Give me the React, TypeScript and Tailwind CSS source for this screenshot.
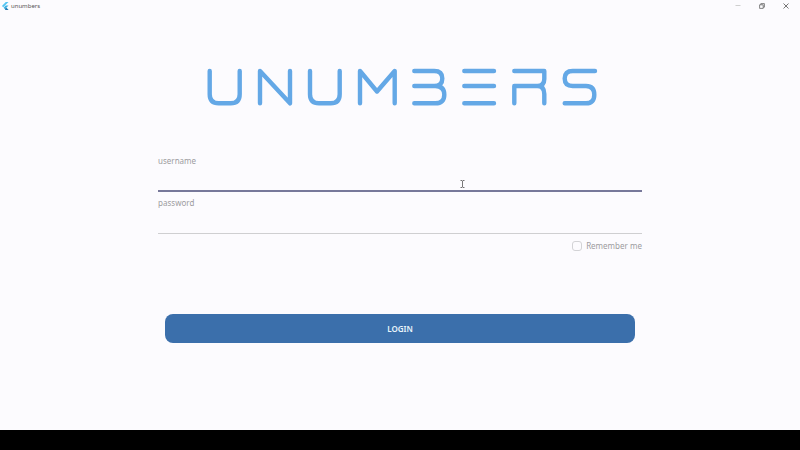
import { useId, type InputHTMLAttributes } from "react";

function AppIcon() {
  return (
    <svg viewBox="0 0 16 16" className="h-2.5 w-2" aria-hidden="true">
      <path d="M9.5 0H15L4.5 10.5 1.8 7.8z" fill="#55c5f3" />
      <path d="M9.5 7.2H15L10.7 11.5 15 16H9.5L5.2 11.5z" fill="#3fb2e3" />
      <path d="M8 14.3 10.7 11.5 15 16H9.5z" fill="#2b77ad" />
    </svg>
  );
}

function TitleBar() {
  return (
    <header className="flex h-3 shrink-0 items-center justify-between pr-0.5 pl-px">
      <div className="flex items-center gap-0.5">
        <AppIcon />
        <span className="text-[6px] leading-3 text-[#555555]">unumbers</span>
      </div>
      <div className="flex">
        <button type="button" aria-label="Minimize" className="flex h-3 w-6 items-center justify-center">
          <svg viewBox="0 0 6 6" className="size-1.5" stroke="#cfcfcf" strokeWidth="1">
            <path d="M0.5 2.5H5.5" />
          </svg>
        </button>
        <button type="button" aria-label="Restore" className="flex h-3 w-6 items-center justify-center">
          <svg viewBox="0 0 6 6" className="size-1.5" fill="none" stroke="#666666" strokeWidth="0.8">
            <path d="M0.6 1.8H4.2V5.4H0.6z M1.8 1.8V0.6H5.4V4.2H4.2" />
          </svg>
        </button>
        <button type="button" aria-label="Close" className="flex h-3 w-6 items-center justify-center">
          <svg viewBox="0 0 6 6" className="size-1.5" stroke="#666666" strokeWidth="0.9">
            <path d="M0.5 0.5 5.5 5.5M5.5 0.5 0.5 5.5" />
          </svg>
        </button>
      </div>
    </header>
  );
}

function Logo() {
  return (
    <svg
      viewBox="-5 0 396 38"
      role="img"
      aria-label="unumbers"
      className="h-[38px] w-[396px] max-w-full"
      fill="none"
      stroke="#64a8e6"
      strokeWidth="4.4"
      strokeLinecap="round"
      strokeLinejoin="round"
    >
      <path d="M2.7 3V26.3Q2.7 35.3 11.7 35.3H23.7Q32.7 35.3 32.7 26.3V3" />
      <path d="M53 35.3V3L83 35.3V3" />
      <path d="M103 3V26.3Q103 35.3 112 35.3H123.7Q132.7 35.3 132.7 26.3V3" />
      <path d="M153 35.3V3L170 23.5 187.7 3V35.3" />
      <path d="M207.3 3H227.3Q235.3 3 235.3 10.5 235.3 18 227.3 18M207.3 18H228.3Q237.3 18 237.3 26.7 237.3 35.3 228.3 35.3H207.3" />
      <path d="M257.3 3H287M257.3 18H287M257.3 35.3H287" />
      <path d="M307.3 3H337.3V11Q337.3 18 330.3 18M307.3 35.3V18H330.3Q337.3 18 337.3 26V35.3" />
      <path d="M388 3H365.7Q357.7 3 357.7 10.5 357.7 18 365.7 18H379Q387.3 18 387.3 26.7 387.3 35.3 379 35.3H357.7" />
    </svg>
  );
}

type FieldProps = InputHTMLAttributes<HTMLInputElement> & { label: string };

function Field({ label, ...props }: FieldProps) {
  const id = useId();
  return (
    <div className="flex flex-col">
      <label htmlFor={id} className="text-[8px] leading-[10px] text-[#9c9c9f]">
        {label}
      </label>
      <input
        id={id}
        className="h-[26px] border-b border-[#cfcfd1] bg-transparent text-[8px] text-[#444444] outline-none"
        {...props}
      />
    </div>
  );
}

function TextCursor() {
  return (
    <svg viewBox="0 0 5 8" className="absolute top-6 left-[62.5%] h-2 w-[5px]" fill="none" stroke="#555555" strokeWidth="0.8" aria-hidden="true">
      <path d="M0.5 0.5H2L2.5 1 3 0.5H4.5M2.5 1V7M0.5 7.5H2L2.5 7 3 7.5H4.5" />
    </svg>
  );
}

export default function App() {
  return (
    <div className="flex min-h-screen flex-col bg-[#fcfbfe] font-['Noto_Sans',sans-serif]">
      <TitleBar />
      <main className="flex flex-1 flex-col items-center px-4 pt-14">
        <Logo />
        <form
          className="relative mt-[50px] flex w-[63%] flex-col gap-1.5"
          onSubmit={(e) => e.preventDefault()}
        >
          <Field
            label="username"
            name="username"
            autoComplete="off"
            className="h-[26px] border-b-2 border-[#77789a] bg-transparent text-[8px] text-[#444444] outline-none"
          />
          <Field label="password" name="password" type="password" />
          <TextCursor />
          <label className="flex items-center gap-1 self-end text-[8px] leading-3 text-[#9c9c9f]">
            <input
              type="checkbox"
              className="size-2.5 appearance-none rounded-[3px] border border-[#d3d3d6] checked:bg-[#3b6ea9]"
            />
            Remember me
          </label>
          <button
            type="submit"
            className="mt-14 h-[29px] w-[97%] self-center rounded-lg bg-[#3b6fab] text-[8px] font-semibold text-[#eaf6fb]"
          >
            LOGIN
          </button>
        </form>
      </main>
      <footer className="h-5 shrink-0 bg-black" />
    </div>
  );
}
